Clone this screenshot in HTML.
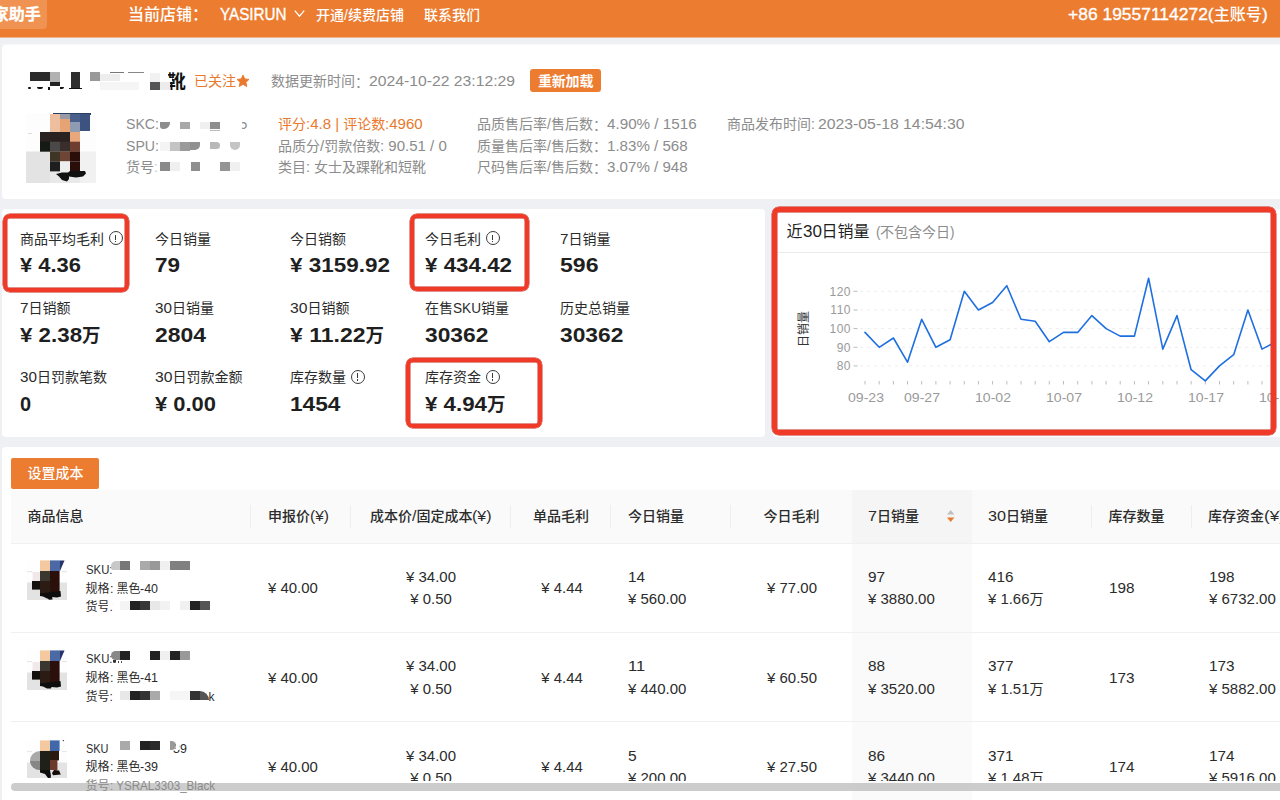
<!DOCTYPE html>
<html lang="zh-CN">
<head>
<meta charset="utf-8">
<title>卖家助手 - 商品详情</title>
<style>
*{box-sizing:border-box;margin:0;padding:0}
html,body{width:1280px;height:800px;overflow:hidden}
body{background:#eef0f4;font-family:"Liberation Sans","Noto Sans CJK SC",sans-serif;font-size:14px;color:#333;position:relative}
.abs{position:absolute;white-space:nowrap}
.lo{display:inline-block;vertical-align:baseline}
.li{display:inline-block;transform-origin:0 50%;white-space:pre}
.box{position:absolute}
#top{position:absolute;left:0;top:0;width:1280px;height:38px;background:linear-gradient(to bottom,#ec7c30 37px,#f0b48c 37px)}
#logo{position:absolute;left:-40px;top:0;width:87px;height:29px;background:rgba(255,255,255,.17);border-radius:0 0 4px 0}
.w{color:#fff}
.fc{position:relative;top:0.04em}
.sk .li{-webkit-text-stroke:.35px #fff}
.f16{font-size:16px}
.f12{font-size:12px}
.f20{font-size:20px;font-weight:bold;color:#1f1f1f}
.b{font-weight:bold}
.m{font-weight:500}
.card{position:absolute;background:#fff;border-radius:4px}
.g{color:#8c8c8c}
.o{color:#e8792d}
.d{color:#2b2b2b}
.ax{font-size:12px;color:#9a9a9a}
.btn{position:absolute;background:#ec7c30;border-radius:3px}
.info{position:absolute;width:14px;height:14px;border:1.1px solid #3a3a3a;border-radius:50%}
.info:before{content:"";position:absolute;left:5.3px;top:2.7px;width:1.2px;height:4.8px;background:#3a3a3a}
.info:after{content:"";position:absolute;left:5.3px;top:8.6px;width:1.2px;height:1.3px;background:#3a3a3a}
.red{position:absolute;border:4.6px solid #ee3a26;border-radius:7px;box-shadow:inset 0 0 0 .45px #c5221a,0 0 0 .45px #c5221a}
.sep{position:absolute;width:1px;height:23px;top:504.5px;background:#eeeeee}
.hl{position:absolute;height:1px;background:#f0f0f0}
</style>
</head>
<body>
<div id="top"><div id="logo"></div></div>
<svg class="box" style="left:293px;top:9px" width="14" height="10" viewBox="0 0 14 10"><path d="M1.8 1.6 L6.5 7.2 L11.2 1.6" fill="none" stroke="#fff" stroke-width="1.3"/></svg>
<div class="box" style="left:3px;top:44px;width:1280px;height:2px;background:#f7f8fa"></div>
<div class="card" style="left:2px;top:45px;width:1290px;height:154px"></div>
<svg class="box" style="left:236.4px;top:73.8px" width="14" height="14" viewBox="0 0 15 15"><path d="M7.5 1.2 L9.4 5.3 L13.9 5.8 L10.6 8.9 L11.5 13.4 L7.5 11.1 L3.5 13.4 L4.4 8.9 L1.1 5.8 L5.6 5.3 Z" fill="#e8792d" stroke="#e8792d" stroke-width="1" stroke-linejoin="round"/></svg>
<div class="btn" style="left:530px;top:69px;width:71px;height:23px"></div>
<div class="card" style="left:2px;top:209px;width:763px;height:228px"></div>
<div class="info" style="left:108.6px;top:231.2px"></div>
<div class="info" style="left:485.6px;top:231.2px"></div>
<div class="info" style="left:350.6px;top:369.7px"></div>
<div class="info" style="left:485.6px;top:369.7px"></div>
<div class="red" style="left:3.4px;top:213.7px;width:125.2px;height:78.4px"></div>
<div class="red" style="left:410px;top:214.3px;width:119.2px;height:76.5px"></div>
<div class="red" style="left:406.4px;top:357.6px;width:135.2px;height:70.3px"></div>
<div class="card" style="left:773px;top:209px;width:520px;height:228px"></div>
<div class="hl" style="left:777px;top:251.5px;width:495px;background:#ebebeb"></div>
<svg class="box" style="left:773px;top:208px" width="502" height="228" viewBox="773 208 502 228"><line x1="860" x2="1290" y1="291.3" y2="291.3" stroke="#eeeeee" stroke-width="1" stroke-dasharray="3 4"/><line x1="853.5" x2="857.5" y1="291.3" y2="291.3" stroke="#bbb" stroke-width="1"/><line x1="860" x2="1290" y1="310.0" y2="310.0" stroke="#eeeeee" stroke-width="1" stroke-dasharray="3 4"/><line x1="853.5" x2="857.5" y1="310.0" y2="310.0" stroke="#bbb" stroke-width="1"/><line x1="860" x2="1290" y1="328.6" y2="328.6" stroke="#eeeeee" stroke-width="1" stroke-dasharray="3 4"/><line x1="853.5" x2="857.5" y1="328.6" y2="328.6" stroke="#bbb" stroke-width="1"/><line x1="860" x2="1290" y1="347.3" y2="347.3" stroke="#eeeeee" stroke-width="1" stroke-dasharray="3 4"/><line x1="853.5" x2="857.5" y1="347.3" y2="347.3" stroke="#bbb" stroke-width="1"/><line x1="860" x2="1290" y1="365.9" y2="365.9" stroke="#eeeeee" stroke-width="1" stroke-dasharray="3 4"/><line x1="853.5" x2="857.5" y1="365.9" y2="365.9" stroke="#bbb" stroke-width="1"/><line x1="865.0" x2="865.0" y1="381" y2="384.5" stroke="#bdbdbd" stroke-width="1"/><line x1="879.2" x2="879.2" y1="381" y2="384.5" stroke="#bdbdbd" stroke-width="1"/><line x1="893.4" x2="893.4" y1="381" y2="384.5" stroke="#bdbdbd" stroke-width="1"/><line x1="907.5" x2="907.5" y1="381" y2="384.5" stroke="#bdbdbd" stroke-width="1"/><line x1="921.7" x2="921.7" y1="381" y2="384.5" stroke="#bdbdbd" stroke-width="1"/><line x1="935.9" x2="935.9" y1="381" y2="384.5" stroke="#bdbdbd" stroke-width="1"/><line x1="950.1" x2="950.1" y1="381" y2="384.5" stroke="#bdbdbd" stroke-width="1"/><line x1="964.3" x2="964.3" y1="381" y2="384.5" stroke="#bdbdbd" stroke-width="1"/><line x1="978.4" x2="978.4" y1="381" y2="384.5" stroke="#bdbdbd" stroke-width="1"/><line x1="992.6" x2="992.6" y1="381" y2="384.5" stroke="#bdbdbd" stroke-width="1"/><line x1="1006.8" x2="1006.8" y1="381" y2="384.5" stroke="#bdbdbd" stroke-width="1"/><line x1="1021.0" x2="1021.0" y1="381" y2="384.5" stroke="#bdbdbd" stroke-width="1"/><line x1="1035.2" x2="1035.2" y1="381" y2="384.5" stroke="#bdbdbd" stroke-width="1"/><line x1="1049.3" x2="1049.3" y1="381" y2="384.5" stroke="#bdbdbd" stroke-width="1"/><line x1="1063.5" x2="1063.5" y1="381" y2="384.5" stroke="#bdbdbd" stroke-width="1"/><line x1="1077.7" x2="1077.7" y1="381" y2="384.5" stroke="#bdbdbd" stroke-width="1"/><line x1="1091.9" x2="1091.9" y1="381" y2="384.5" stroke="#bdbdbd" stroke-width="1"/><line x1="1106.1" x2="1106.1" y1="381" y2="384.5" stroke="#bdbdbd" stroke-width="1"/><line x1="1120.2" x2="1120.2" y1="381" y2="384.5" stroke="#bdbdbd" stroke-width="1"/><line x1="1134.4" x2="1134.4" y1="381" y2="384.5" stroke="#bdbdbd" stroke-width="1"/><line x1="1148.6" x2="1148.6" y1="381" y2="384.5" stroke="#bdbdbd" stroke-width="1"/><line x1="1162.8" x2="1162.8" y1="381" y2="384.5" stroke="#bdbdbd" stroke-width="1"/><line x1="1177.0" x2="1177.0" y1="381" y2="384.5" stroke="#bdbdbd" stroke-width="1"/><line x1="1191.1" x2="1191.1" y1="381" y2="384.5" stroke="#bdbdbd" stroke-width="1"/><line x1="1205.3" x2="1205.3" y1="381" y2="384.5" stroke="#bdbdbd" stroke-width="1"/><line x1="1219.5" x2="1219.5" y1="381" y2="384.5" stroke="#bdbdbd" stroke-width="1"/><line x1="1233.7" x2="1233.7" y1="381" y2="384.5" stroke="#bdbdbd" stroke-width="1"/><line x1="1247.9" x2="1247.9" y1="381" y2="384.5" stroke="#bdbdbd" stroke-width="1"/><line x1="1262.0" x2="1262.0" y1="381" y2="384.5" stroke="#bdbdbd" stroke-width="1"/><line x1="1276.2" x2="1276.2" y1="381" y2="384.5" stroke="#bdbdbd" stroke-width="1"/><polyline points="865.0,332.4 879.2,347.3 893.4,338.0 907.5,362.2 921.7,319.3 935.9,347.3 950.1,339.8 964.3,291.3 978.4,310.0 992.6,302.5 1006.8,285.7 1021.0,319.3 1035.2,321.2 1049.3,341.7 1063.5,332.4 1077.7,332.4 1091.9,315.6 1106.1,328.6 1120.2,336.1 1134.4,336.1 1148.6,278.2 1162.8,349.1 1177.0,315.6 1191.1,369.7 1205.3,380.9 1219.5,365.9 1233.7,354.7 1247.9,310.0 1262.0,349.1 1276.2,341.7" fill="none" stroke="#1e6fe0" stroke-width="1.6" stroke-linejoin="round" stroke-linecap="round"/></svg>
<div class="card" style="left:2px;top:447px;width:1290px;height:360px"></div>
<div class="btn" style="left:11px;top:457.5px;width:88px;height:31.5px;border-radius:2px"></div>
<div class="box" style="left:11px;top:489.5px;width:1280px;height:54px;background:#fafafa"></div>
<div class="box" style="left:851.5px;top:489.5px;width:120px;height:54px;background:#f5f5f5"></div>
<div class="box" style="left:851.5px;top:543.5px;width:120px;height:260px;background:#fafafa"></div>
<div class="sep" style="left:250.0px"></div>
<div class="sep" style="left:350.0px"></div>
<div class="sep" style="left:510.0px"></div>
<div class="sep" style="left:610.0px"></div>
<div class="sep" style="left:730.0px"></div>
<div class="sep" style="left:1091.0px"></div>
<div class="sep" style="left:1191.0px"></div>
<div class="hl" style="left:11px;top:543px;width:1280px"></div>
<div class="hl" style="left:11px;top:632px;width:1280px"></div>
<div class="hl" style="left:11px;top:721px;width:1280px"></div>
<svg class="box" style="left:946px;top:509px" width="10" height="14" viewBox="0 0 10 14"><path d="M1 5.4 L4.7 1 L8.4 5.4 Z" fill="#bfbfbf"/><path d="M1 8.6 L4.7 13 L8.4 8.6 Z" fill="#e8792d"/></svg>
<svg class="box" style="left:26px;top:112.5px" width="70" height="70" viewBox="0 0 70 70"><rect x="0.0" y="0.0" width="70.0" height="70.0" fill="#fdfdfd"/><rect x="0.0" y="38.5" width="24.0" height="31.5" fill="#e3e3e3"/><rect x="54.0" y="38.5" width="16.0" height="31.5" fill="#f1f1f1"/><rect x="24.0" y="58.0" width="30.0" height="12.0" fill="#e9e9e9"/><rect x="27.0" y="0.0" width="38.0" height="2.0" fill="#2c3e63"/><rect x="24.0" y="1.0" width="10.0" height="18.0" fill="#eebf9f"/><rect x="34.0" y="1.0" width="10.0" height="18.0" fill="#e6a374"/><rect x="34.0" y="1.0" width="10.0" height="5.0" fill="#9a9aa6"/><rect x="44.0" y="1.0" width="10.0" height="8.0" fill="#4a5f8a"/><rect x="44.0" y="9.0" width="10.0" height="10.0" fill="#8f9bb3"/><rect x="54.0" y="1.0" width="10.0" height="17.0" fill="#3c527f"/><rect x="14.0" y="19.0" width="30.0" height="10.0" fill="#2a2220"/><rect x="44.0" y="19.0" width="10.0" height="10.0" fill="#e9a77c"/><rect x="14.0" y="28.7" width="10.0" height="10.0" fill="#161a14"/><rect x="24.0" y="28.7" width="10.0" height="10.0" fill="#4a4848"/><rect x="34.0" y="28.7" width="10.0" height="10.0" fill="#3a2e2c"/><rect x="44.0" y="28.7" width="10.0" height="10.0" fill="#6e3f30"/><rect x="24.0" y="38.5" width="10.0" height="10.0" fill="#3e3524"/><rect x="34.0" y="38.5" width="10.0" height="10.0" fill="#6e4434"/><rect x="44.0" y="38.5" width="10.0" height="10.0" fill="#2a0e0a"/><rect x="24.0" y="48.4" width="10.0" height="10.0" fill="#1e1e1e"/><rect x="34.0" y="48.4" width="10.0" height="10.0" fill="#eeeeee"/><rect x="44.0" y="48.4" width="10.0" height="10.0" fill="#2a0e0a"/><path d="M30 61 L36 59.5 L42 59.5 L44 58 L59 58 L60 60.5 L57 63.5 L50 64.5 L43 63.5 L43 66 L41 68.5 L36 67 L33 63.5 Z" fill="#111"/><rect x="2" y="20" width="4" height="1" fill="#ddd"/></svg>
<svg class="box" style="left:27.0px;top:559.8px" width="40" height="40" viewBox="0 0 40 40"><rect x="0.0" y="0.0" width="40.0" height="40.0" fill="#fefefe"/><rect x="0.0" y="22.5" width="40.0" height="17.5" fill="#e3e3e3"/><rect x="0.0" y="11.3" width="5.0" height="0.8" fill="#ddd"/><rect x="35.0" y="11.3" width="5.0" height="0.8" fill="#ddd"/><rect x="13.0" y="0.4" width="10.0" height="10.6" fill="#f4c9a0"/><rect x="23.0" y="0.4" width="10.0" height="10.6" fill="#4b69a4"/><rect x="5.6" y="12.0" width="7.4" height="9.0" fill="#f1e8ea"/><rect x="13.0" y="11.0" width="10.0" height="10.0" fill="#3a3630"/><rect x="23.0" y="11.0" width="9.6" height="24.0" fill="#2a0f0a"/><rect x="13.0" y="21.0" width="10.0" height="14.0" fill="#2a1c12"/><rect x="5.0" y="21.0" width="8.0" height="8.6" fill="#15110f"/><path d="M33 0.4 L37.5 0.4 L33 11 Z" fill="#26346a"/><path d="M32.6 11 L34 11 L31.5 22 L33.5 30 L33.8 36 L32.6 36 Z" fill="#fff" opacity=".0"/><path d="M13 33.5 L33.5 31 L34 36.5 L30 37.5 L24.5 37 L24 38.5 L20 38.6 L16 36.5 L13 36 Z" fill="#0d0d0d"/><path d="M21 36 L25 36 L25.5 39.6 L22 39.8 L20 37.5 Z" fill="#0d0d0d"/></svg>
<svg class="box" style="left:27.0px;top:649.6px" width="40" height="40" viewBox="0 0 40 40"><rect x="0.0" y="0.0" width="40.0" height="40.0" fill="#fefefe"/><rect x="0.0" y="22.5" width="40.0" height="17.5" fill="#e3e3e3"/><rect x="0.0" y="11.3" width="5.0" height="0.8" fill="#ddd"/><rect x="35.0" y="11.3" width="5.0" height="0.8" fill="#ddd"/><rect x="13.0" y="0.4" width="10.0" height="10.6" fill="#f4c9a0"/><rect x="23.0" y="0.4" width="10.0" height="10.6" fill="#4b69a4"/><rect x="5.6" y="12.0" width="7.4" height="9.0" fill="#f1e8ea"/><rect x="13.0" y="11.0" width="10.0" height="10.0" fill="#3a3630"/><rect x="23.0" y="11.0" width="9.6" height="24.0" fill="#2a0f0a"/><rect x="13.0" y="21.0" width="10.0" height="14.0" fill="#2a1c12"/><rect x="5.0" y="21.0" width="8.0" height="8.6" fill="#15110f"/><path d="M33 0.4 L37.5 0.4 L33 11 Z" fill="#26346a"/><path d="M32.6 11 L34 11 L31.5 22 L33.5 30 L33.8 36 L32.6 36 Z" fill="#fff" opacity=".0"/><path d="M13 33.5 L33.5 31 L34 36.5 L30 37.5 L24.5 37 L24 38.5 L20 38.6 L16 36.5 L13 36 Z" fill="#0d0d0d"/></svg>
<svg class="box" style="left:27.0px;top:739.6px" width="40" height="38.4" viewBox="0 0 40 38.4"><rect x="0.0" y="0.0" width="40.0" height="40.0" fill="#fefefe"/><rect x="0.0" y="22.5" width="40.0" height="17.5" fill="#e3e3e3"/><rect x="0.0" y="11.3" width="5.0" height="0.8" fill="#ddd"/><rect x="35.0" y="11.3" width="5.0" height="0.8" fill="#ddd"/><rect x="13.0" y="0.4" width="10.0" height="10.6" fill="#f4c9a0"/><rect x="23.0" y="0.4" width="9.6" height="10.6" fill="#4168a8"/><rect x="13.0" y="11.0" width="10.0" height="21.0" fill="#1f2118"/><rect x="23.0" y="11.0" width="9.0" height="9.4" fill="#2a1a10"/><rect x="23.0" y="20.0" width="7.4" height="10.0" fill="#6b3a2c"/><path d="M13 11 L13 30 A10 9.8 0 0 1 3 20.5 A10 9.6 0 0 1 13 11 Z" fill="#a9a9a9"/><path d="M13 21 L13 30 A10 9.8 0 0 1 3 21 Z" fill="#868686"/><path d="M35 -1 L37.6 -1 L36.4 1.6 Z" fill="#1c2340"/><path d="M13 30 L23 30 L24 36 L23.5 38.2 L21 38 L18 34 L13 32.5 Z" fill="#0d0d0d"/><path d="M25 33 L27 30 L32 30.5 L33.8 34.5 L26 35.2 Z" fill="#140a08"/></svg>
<div id="t1" class="abs w f16 b" style="top:5.0px;line-height:20px;left:-23.2px;-webkit-text-stroke:.3px #fff;">卖家助手</div>
<div id="t2" class="abs w f16 m" style="top:4.5px;line-height:20px;left:128.0px;">当前店铺<span class="fc">：</span></div>
<div id="t3" class="abs w f16 sk" style="top:5.0px;line-height:20px;left:219.5px;"><span class="lo" style="width:66.50px"><span class="li" style="transform:scaleX(0.9508)">YASIRUN</span></span></div>
<div id="t4" class="abs w m" style="top:4.5px;line-height:20px;left:316.0px;">开通/续费店铺</div>
<div id="t5" class="abs w m" style="top:4.5px;line-height:20px;left:424.0px;">联系我们</div>
<div id="t6" class="abs w f16 sk m" style="top:4.5px;line-height:20px;left:1068.0px;"><span class="lo" style="width:145.67px"><span class="li" style="transform:scaleX(1.0903)">+86 19557114272(</span></span>主账号<span class="lo" style="width:5.81px"><span class="li" style="transform:scaleX(1.0903)">)</span></span></div>
<div id="t7" class="abs b" style="top:69.0px;line-height:26px;left:167.2px;font-size:18.5px;color:#111;">靴</div>
<div id="t8" class="abs o" style="top:71.0px;line-height:20px;left:194.0px;">已关注</div>
<div id="t9" class="abs g" style="top:71.0px;line-height:20px;left:271.0px;">数据更新时间<span class="fc">：</span></div>
<div id="t10" class="abs g" style="top:71.0px;line-height:20px;left:369.0px;"><span class="lo" style="width:146.00px"><span class="li" style="transform:scaleX(1.1231)">2024-10-22 23:12:29</span></span></div>
<div id="t11" class="abs w b" style="top:70.5px;line-height:20px;left:538.0px;letter-spacing:-0.2px;">重新加载</div>
<div id="t12" class="abs g" style="top:114.0px;line-height:20px;left:126.0px;"><span class="lo" style="width:33.00px"><span class="li" style="transform:scaleX(1.0096)">SKC:</span></span></div>
<div id="t13" class="abs g" style="top:114.0px;line-height:20px;left:239.6px;">5</div>
<div id="t14" class="abs g" style="top:135.6px;line-height:20px;left:126.0px;"><span class="lo" style="width:33.00px"><span class="li" style="transform:scaleX(1.0096)">SPU:</span></span></div>
<div id="t15" class="abs g" style="top:157.2px;line-height:20px;left:126.0px;">货号:</div>
<div id="t16" class="abs o" style="top:114.0px;line-height:20px;left:278.0px;">评分<span class="lo" style="width:37.36px"><span class="li" style="transform:scaleX(1.0741)">:4.8 | </span></span>评论数<span class="lo" style="width:37.65px"><span class="li" style="transform:scaleX(1.0741)">:4960</span></span></div>
<div id="t17" class="abs g" style="top:135.6px;line-height:20px;left:278.0px;">品质分<span class="lo" style="width:4.17px"><span class="li" style="transform:scaleX(1.0730)">/</span></span>罚款倍数<span class="lo" style="width:66.83px"><span class="li" style="transform:scaleX(1.0730)">: 90.51 / 0</span></span></div>
<div id="t18" class="abs g" style="top:157.2px;line-height:20px;left:278.0px;">类目<span class="lo" style="width:8.00px"><span class="li" style="transform:scaleX(1.0281)">: </span></span>女士及踝靴和短靴</div>
<div id="t19" class="abs g" style="top:114.0px;line-height:20px;left:477.0px;">品质售后率/售后数<span class="fc">：</span></div>
<div id="t20" class="abs g" style="top:114.0px;line-height:20px;left:607.0px;"><span class="lo" style="width:89.61px"><span class="li" style="transform:scaleX(1.0859)">4.90% / 1516</span></span></div>
<div id="t21" class="abs g" style="top:135.6px;line-height:20px;left:477.0px;">质量售后率/售后数<span class="fc">：</span></div>
<div id="t22" class="abs g" style="top:135.6px;line-height:20px;left:607.0px;"><span class="lo" style="width:80.69px"><span class="li" style="transform:scaleX(1.0798)">1.83% / 568</span></span></div>
<div id="t23" class="abs g" style="top:157.2px;line-height:20px;left:477.0px;">尺码售后率/售后数<span class="fc">：</span></div>
<div id="t24" class="abs g" style="top:157.2px;line-height:20px;left:607.0px;"><span class="lo" style="width:80.69px"><span class="li" style="transform:scaleX(1.0798)">3.07% / 948</span></span></div>
<div id="t25" class="abs g" style="top:114.0px;line-height:20px;left:727.0px;">商品发布时间:</div>
<div id="t26" class="abs g" style="top:114.0px;line-height:20px;left:818.0px;"><span class="lo" style="width:146.50px"><span class="li" style="transform:scaleX(1.1269)">2023-05-18 14:54:30</span></span></div>
<div id="t27" class="abs d" style="top:228.5px;line-height:20px;left:20.0px;">商品平均毛利</div>
<div id="t28" class="abs f20" style="top:252.0px;line-height:26px;left:20.0px;"><span class="lo" style="width:61.00px"><span class="li" style="transform:scaleX(1.0969)">¥ 4.36</span></span></div>
<div id="t29" class="abs d" style="top:228.5px;line-height:20px;left:155.0px;">今日销量</div>
<div id="t30" class="abs f20" style="top:252.0px;line-height:26px;left:155.0px;"><span class="lo" style="width:25.00px"><span class="li" style="transform:scaleX(1.1236)">79</span></span></div>
<div id="t31" class="abs d" style="top:228.5px;line-height:20px;left:290.0px;">今日销额</div>
<div id="t32" class="abs f20" style="top:252.0px;line-height:26px;left:290.0px;"><span class="lo" style="width:100.00px"><span class="li" style="transform:scaleX(1.1238)">¥ 3159.92</span></span></div>
<div id="t33" class="abs d" style="top:228.5px;line-height:20px;left:425.0px;">今日毛利</div>
<div id="t34" class="abs f20" style="top:252.0px;line-height:26px;left:425.0px;"><span class="lo" style="width:87.00px"><span class="li" style="transform:scaleX(1.1174)">¥ 434.42</span></span></div>
<div id="t35" class="abs d" style="top:228.5px;line-height:20px;left:560.0px;"><span class="lo" style="width:8.50px"><span class="li" style="transform:scaleX(1.0902)">7</span></span>日销量</div>
<div id="t36" class="abs f20" style="top:252.0px;line-height:26px;left:560.0px;"><span class="lo" style="width:38.51px"><span class="li" style="transform:scaleX(1.1536)">596</span></span></div>
<div id="t37" class="abs d" style="top:297.5px;line-height:20px;left:20.0px;"><span class="lo" style="width:8.60px"><span class="li" style="transform:scaleX(1.1030)">7</span></span>日销额</div>
<div id="t38" class="abs f20" style="top:321.5px;line-height:26px;left:20.0px;"><span class="lo" style="width:62.08px"><span class="li" style="transform:scaleX(1.1164)">¥ 2.38</span></span><span style="font-size:18.5px">万</span></div>
<div id="t39" class="abs d" style="top:297.5px;line-height:20px;left:155.0px;"><span class="lo" style="width:17.00px"><span class="li" style="transform:scaleX(1.0913)">30</span></span>日销量</div>
<div id="t40" class="abs f20" style="top:321.5px;line-height:26px;left:155.0px;"><span class="lo" style="width:51.00px"><span class="li" style="transform:scaleX(1.1461)">2804</span></span></div>
<div id="t41" class="abs d" style="top:297.5px;line-height:20px;left:290.0px;"><span class="lo" style="width:17.50px"><span class="li" style="transform:scaleX(1.1234)">30</span></span>日销额</div>
<div id="t42" class="abs f20" style="top:321.5px;line-height:26px;left:290.0px;"><span class="lo" style="width:75.48px"><span class="li" style="transform:scaleX(1.1502)">¥ 11.22</span></span><span style="font-size:18.5px">万</span></div>
<div id="t43" class="abs d" style="top:297.5px;line-height:20px;left:425.0px;">在售<span class="lo" style="width:28.00px"><span class="li" style="transform:scaleX(0.9723)">SKU</span></span>销量</div>
<div id="t44" class="abs f20" style="top:321.5px;line-height:26px;left:425.0px;"><span class="lo" style="width:63.40px"><span class="li" style="transform:scaleX(1.1398)">30362</span></span></div>
<div id="t45" class="abs d" style="top:297.5px;line-height:20px;left:560.0px;">历史总销量</div>
<div id="t46" class="abs f20" style="top:321.5px;line-height:26px;left:560.0px;"><span class="lo" style="width:63.40px"><span class="li" style="transform:scaleX(1.1398)">30362</span></span></div>
<div id="t47" class="abs d" style="top:367.0px;line-height:20px;left:20.0px;"><span class="lo" style="width:17.00px"><span class="li" style="transform:scaleX(1.0913)">30</span></span>日罚款笔数</div>
<div id="t48" class="abs f20" style="top:391.0px;line-height:26px;left:20.0px;">0</div>
<div id="t49" class="abs d" style="top:367.0px;line-height:20px;left:155.0px;"><span class="lo" style="width:17.50px"><span class="li" style="transform:scaleX(1.1234)">30</span></span>日罚款金额</div>
<div id="t50" class="abs f20" style="top:391.0px;line-height:26px;left:155.0px;"><span class="lo" style="width:61.00px"><span class="li" style="transform:scaleX(1.0969)">¥ 0.00</span></span></div>
<div id="t51" class="abs d" style="top:367.0px;line-height:20px;left:290.0px;">库存数量</div>
<div id="t52" class="abs f20" style="top:391.0px;line-height:26px;left:290.0px;"><span class="lo" style="width:50.50px"><span class="li" style="transform:scaleX(1.1348)">1454</span></span></div>
<div id="t53" class="abs d" style="top:367.0px;line-height:20px;left:425.0px;">库存资金</div>
<div id="t54" class="abs f20" style="top:391.0px;line-height:26px;left:425.0px;"><span class="lo" style="width:61.98px"><span class="li" style="transform:scaleX(1.1146)">¥ 4.94</span></span><span style="font-size:18.5px">万</span></div>
<div id="t55" class="abs f16" style="top:220.5px;line-height:22px;left:786.5px;color:#1f1f1f;">近<span class="lo" style="width:18.97px"><span class="li" style="transform:scaleX(1.0658)">30</span></span>日销量</div>
<div id="t56" class="abs g" style="top:222.0px;line-height:20px;left:875.5px;"><span class="lo" style="width:4.50px"><span class="li" style="transform:scaleX(0.9632)">(</span></span>不包含今日<span class="lo" style="width:4.50px"><span class="li" style="transform:scaleX(0.9632)">)</span></span></div>
<div id="t57" class="abs ax" style="top:284.6px;line-height:14px;right:429.5px;letter-spacing:0.5px;margin-right:-0.5px;">120</div>
<div id="t58" class="abs ax" style="top:303.3px;line-height:14px;right:429.5px;letter-spacing:0.5px;margin-right:-0.5px;">110</div>
<div id="t59" class="abs ax" style="top:321.9px;line-height:14px;right:429.5px;letter-spacing:0.5px;margin-right:-0.5px;">100</div>
<div id="t60" class="abs ax" style="top:340.6px;line-height:14px;right:429.5px;letter-spacing:0.5px;margin-right:-0.5px;">90</div>
<div id="t61" class="abs ax" style="top:359.2px;line-height:14px;right:429.5px;letter-spacing:0.5px;margin-right:-0.5px;">80</div>
<div id="t62" class="abs ax" style="top:390.5px;line-height:14px;left:865.5px;transform:translateX(-50%);"><span class="lo" style="width:36.00px"><span class="li" style="transform:scaleX(1.1725)">09-23</span></span></div>
<div id="t63" class="abs ax" style="top:390.5px;line-height:14px;left:922.2px;transform:translateX(-50%);"><span class="lo" style="width:36.00px"><span class="li" style="transform:scaleX(1.1725)">09-27</span></span></div>
<div id="t64" class="abs ax" style="top:390.5px;line-height:14px;left:993.1px;transform:translateX(-50%);"><span class="lo" style="width:36.00px"><span class="li" style="transform:scaleX(1.1725)">10-02</span></span></div>
<div id="t65" class="abs ax" style="top:390.5px;line-height:14px;left:1064.0px;transform:translateX(-50%);"><span class="lo" style="width:36.00px"><span class="li" style="transform:scaleX(1.1725)">10-07</span></span></div>
<div id="t66" class="abs ax" style="top:390.5px;line-height:14px;left:1134.9px;transform:translateX(-50%);"><span class="lo" style="width:36.00px"><span class="li" style="transform:scaleX(1.1725)">10-12</span></span></div>
<div id="t67" class="abs ax" style="top:390.5px;line-height:14px;left:1205.8px;transform:translateX(-50%);"><span class="lo" style="width:36.00px"><span class="li" style="transform:scaleX(1.1725)">10-17</span></span></div>
<div id="t68" class="abs ax" style="top:390.5px;line-height:14px;left:1276.7px;transform:translateX(-50%);"><span class="lo" style="width:36.00px"><span class="li" style="transform:scaleX(1.1725)">10-22</span></span></div>
<div id="t69" class="abs f12" style="top:322.0px;line-height:14px;left:803.5px;transform:translateX(-50%);color:#333;transform:translateX(-50%) rotate(-90deg);">日销量</div>
<div id="t70" class="abs w m" style="top:463.0px;line-height:20px;left:27.5px;">设置成本</div>
<div id="t71" class="abs m d" style="top:506.2px;line-height:20px;left:27.5px;">商品信息</div>
<div id="t72" class="abs m d" style="top:506.2px;line-height:20px;left:268.0px;">申报价<span class="lo" style="width:18.99px"><span class="li" style="transform:scaleX(1.1095)">(¥)</span></span></div>
<div id="t73" class="abs m d" style="top:506.2px;line-height:20px;left:431.0px;transform:translateX(-50%);">成本价<span class="lo" style="width:4.44px"><span class="li" style="transform:scaleX(1.1420)">/</span></span>固定成本<span class="lo" style="width:19.55px"><span class="li" style="transform:scaleX(1.1420)">(¥)</span></span></div>
<div id="t74" class="abs m d" style="top:506.2px;line-height:20px;left:561.0px;transform:translateX(-50%);">单品毛利</div>
<div id="t75" class="abs m d" style="top:506.2px;line-height:20px;left:628.0px;">今日销量</div>
<div id="t76" class="abs m d" style="top:506.2px;line-height:20px;left:791.5px;transform:translateX(-50%);">今日毛利</div>
<div id="t77" class="abs m d" style="top:506.2px;line-height:20px;left:868.0px;"><span class="lo" style="width:9.00px"><span class="li" style="transform:scaleX(1.1543)">7</span></span>日销量</div>
<div id="t78" class="abs m d" style="top:506.2px;line-height:20px;left:988.0px;"><span class="lo" style="width:18.00px"><span class="li" style="transform:scaleX(1.1555)">30</span></span>日销量</div>
<div id="t79" class="abs m d" style="top:506.2px;line-height:20px;left:1108.5px;">库存数量</div>
<div id="t80" class="abs m d" style="top:506.2px;line-height:20px;left:1208.0px;">库存资金<span class="lo" style="width:20.99px"><span class="li" style="transform:scaleX(1.2263)">(¥)</span></span></div>
<div id="t81" class="abs f12 d" style="top:561.8px;line-height:16px;left:85.5px;"><span class="lo" style="width:26.50px"><span class="li" style="transform:scaleX(0.9459)">SKU:</span></span></div>
<div id="t82" class="abs f12 d" style="top:580.7px;line-height:16px;left:85.5px;">规格<span class="lo" style="width:6.93px"><span class="li" style="transform:scaleX(1.0397)">: </span></span>黑色<span class="lo" style="width:18.03px"><span class="li" style="transform:scaleX(1.0397)">-40</span></span></div>
<div id="t83" class="abs f12 d" style="top:599.3px;line-height:16px;left:85.5px;">货号:</div>
<div id="t84" class="abs d tb" style="top:578.4px;line-height:20px;left:267.5px;"><span class="lo" style="width:49.90px"><span class="li" style="transform:scaleX(1.0681)">¥ 40.00</span></span></div>
<div id="t85" class="abs d tb" style="top:567.0px;line-height:20px;left:431.0px;transform:translateX(-50%);"><span class="lo" style="width:49.90px"><span class="li" style="transform:scaleX(1.0681)">¥ 34.00</span></span></div>
<div id="t86" class="abs d tb" style="top:589.2px;line-height:20px;left:431.0px;transform:translateX(-50%);"><span class="lo" style="width:41.45px"><span class="li" style="transform:scaleX(1.0645)">¥ 0.50</span></span></div>
<div id="t87" class="abs d tb" style="top:578.4px;line-height:20px;left:561.5px;transform:translateX(-50%);"><span class="lo" style="width:41.45px"><span class="li" style="transform:scaleX(1.0645)">¥ 4.44</span></span></div>
<div id="t88" class="abs d tb" style="top:567.0px;line-height:20px;left:628.0px;"><span class="lo" style="width:17.10px"><span class="li" style="transform:scaleX(1.0977)">14</span></span></div>
<div id="t89" class="abs d tb" style="top:589.2px;line-height:20px;left:628.0px;"><span class="lo" style="width:58.35px"><span class="li" style="transform:scaleX(1.0706)">¥ 560.00</span></span></div>
<div id="t90" class="abs d tb" style="top:578.4px;line-height:20px;left:791.5px;transform:translateX(-50%);"><span class="lo" style="width:49.90px"><span class="li" style="transform:scaleX(1.0681)">¥ 77.00</span></span></div>
<div id="t91" class="abs d tb" style="top:567.0px;line-height:20px;left:868.0px;"><span class="lo" style="width:17.10px"><span class="li" style="transform:scaleX(1.0977)">97</span></span></div>
<div id="t92" class="abs d tb" style="top:589.2px;line-height:20px;left:868.0px;"><span class="lo" style="width:66.80px"><span class="li" style="transform:scaleX(1.0723)">¥ 3880.00</span></span></div>
<div id="t93" class="abs d tb" style="top:567.0px;line-height:20px;left:988.0px;"><span class="lo" style="width:25.55px"><span class="li" style="transform:scaleX(1.0938)">416</span></span></div>
<div id="t94" class="abs d tb" style="top:589.2px;line-height:20px;left:988.0px;"><span class="lo" style="width:41.45px"><span class="li" style="transform:scaleX(1.0645)">¥ 1.66</span></span>万</div>
<div id="t95" class="abs d tb" style="top:578.4px;line-height:20px;left:1109.0px;"><span class="lo" style="width:25.55px"><span class="li" style="transform:scaleX(1.0938)">198</span></span></div>
<div id="t96" class="abs d tb" style="top:567.0px;line-height:20px;left:1209.0px;"><span class="lo" style="width:25.55px"><span class="li" style="transform:scaleX(1.0938)">198</span></span></div>
<div id="t97" class="abs d tb" style="top:589.2px;line-height:20px;left:1209.0px;"><span class="lo" style="width:66.80px"><span class="li" style="transform:scaleX(1.0723)">¥ 6732.00</span></span></div>
<div id="t98" class="abs f12 d" style="top:651.2px;line-height:16px;left:85.5px;"><span class="lo" style="width:26.50px"><span class="li" style="transform:scaleX(0.9459)">SKU:</span></span></div>
<div id="t99" class="abs f12 d" style="top:670.1px;line-height:16px;left:85.5px;">规格<span class="lo" style="width:6.93px"><span class="li" style="transform:scaleX(1.0397)">: </span></span>黑色<span class="lo" style="width:18.03px"><span class="li" style="transform:scaleX(1.0397)">-41</span></span></div>
<div id="t100" class="abs f12 d" style="top:688.7px;line-height:16px;left:85.5px;">货号:</div>
<div id="t101" class="abs f12 d" style="top:688.7px;line-height:16px;left:208.6px;">k</div>
<div id="t102" class="abs d tb" style="top:667.8px;line-height:20px;left:267.5px;"><span class="lo" style="width:49.90px"><span class="li" style="transform:scaleX(1.0681)">¥ 40.00</span></span></div>
<div id="t103" class="abs d tb" style="top:656.4px;line-height:20px;left:431.0px;transform:translateX(-50%);"><span class="lo" style="width:49.90px"><span class="li" style="transform:scaleX(1.0681)">¥ 34.00</span></span></div>
<div id="t104" class="abs d tb" style="top:678.6px;line-height:20px;left:431.0px;transform:translateX(-50%);"><span class="lo" style="width:41.45px"><span class="li" style="transform:scaleX(1.0645)">¥ 0.50</span></span></div>
<div id="t105" class="abs d tb" style="top:667.8px;line-height:20px;left:561.5px;transform:translateX(-50%);"><span class="lo" style="width:41.45px"><span class="li" style="transform:scaleX(1.0645)">¥ 4.44</span></span></div>
<div id="t106" class="abs d tb" style="top:656.4px;line-height:20px;left:628.0px;"><span class="lo" style="width:17.10px"><span class="li" style="transform:scaleX(1.1755)">11</span></span></div>
<div id="t107" class="abs d tb" style="top:678.6px;line-height:20px;left:628.0px;"><span class="lo" style="width:58.35px"><span class="li" style="transform:scaleX(1.0706)">¥ 440.00</span></span></div>
<div id="t108" class="abs d tb" style="top:667.8px;line-height:20px;left:791.5px;transform:translateX(-50%);"><span class="lo" style="width:49.90px"><span class="li" style="transform:scaleX(1.0681)">¥ 60.50</span></span></div>
<div id="t109" class="abs d tb" style="top:656.4px;line-height:20px;left:868.0px;"><span class="lo" style="width:17.10px"><span class="li" style="transform:scaleX(1.0977)">88</span></span></div>
<div id="t110" class="abs d tb" style="top:678.6px;line-height:20px;left:868.0px;"><span class="lo" style="width:66.80px"><span class="li" style="transform:scaleX(1.0723)">¥ 3520.00</span></span></div>
<div id="t111" class="abs d tb" style="top:656.4px;line-height:20px;left:988.0px;"><span class="lo" style="width:25.55px"><span class="li" style="transform:scaleX(1.0938)">377</span></span></div>
<div id="t112" class="abs d tb" style="top:678.6px;line-height:20px;left:988.0px;"><span class="lo" style="width:41.45px"><span class="li" style="transform:scaleX(1.0645)">¥ 1.51</span></span>万</div>
<div id="t113" class="abs d tb" style="top:667.8px;line-height:20px;left:1109.0px;"><span class="lo" style="width:25.55px"><span class="li" style="transform:scaleX(1.0938)">173</span></span></div>
<div id="t114" class="abs d tb" style="top:656.4px;line-height:20px;left:1209.0px;"><span class="lo" style="width:25.55px"><span class="li" style="transform:scaleX(1.0938)">173</span></span></div>
<div id="t115" class="abs d tb" style="top:678.6px;line-height:20px;left:1209.0px;"><span class="lo" style="width:66.80px"><span class="li" style="transform:scaleX(1.0723)">¥ 5882.00</span></span></div>
<div id="t116" class="abs f12 d" style="top:740.5px;line-height:16px;left:85.5px;"><span class="lo" style="width:22.50px"><span class="li" style="transform:scaleX(0.9114)">SKU</span></span></div>
<div id="t117" class="abs f12 d" style="top:740.5px;line-height:16px;left:173.3px;"><span class="lo" style="width:13.80px"><span class="li" style="transform:scaleX(1.0330)">39</span></span></div>
<div id="t118" class="abs f12 d" style="top:759.4px;line-height:16px;left:85.5px;">规格<span class="lo" style="width:6.93px"><span class="li" style="transform:scaleX(1.0397)">: </span></span>黑色<span class="lo" style="width:18.03px"><span class="li" style="transform:scaleX(1.0397)">-39</span></span></div>
<div id="t119" class="abs f12" style="top:778.3px;line-height:16px;left:85.5px;color:#8a8a8a;z-index:5;">货号<span class="lo" style="width:104.99px"><span class="li" style="transform:scaleX(0.9675)">: YSRAL3303_Black</span></span></div>
<div id="t120" class="abs d tb" style="top:757.1px;line-height:20px;left:267.5px;"><span class="lo" style="width:49.90px"><span class="li" style="transform:scaleX(1.0681)">¥ 40.00</span></span></div>
<div id="t121" class="abs d tb" style="top:745.7px;line-height:20px;left:431.0px;transform:translateX(-50%);"><span class="lo" style="width:49.90px"><span class="li" style="transform:scaleX(1.0681)">¥ 34.00</span></span></div>
<div id="t122" class="abs d tb" style="top:767.9px;line-height:20px;left:431.0px;transform:translateX(-50%);"><span class="lo" style="width:41.45px"><span class="li" style="transform:scaleX(1.0645)">¥ 0.50</span></span></div>
<div id="t123" class="abs d tb" style="top:757.1px;line-height:20px;left:561.5px;transform:translateX(-50%);"><span class="lo" style="width:41.45px"><span class="li" style="transform:scaleX(1.0645)">¥ 4.44</span></span></div>
<div id="t124" class="abs d tb" style="top:745.7px;line-height:20px;left:628.0px;"><span class="lo" style="width:8.65px"><span class="li" style="transform:scaleX(1.1094)">5</span></span></div>
<div id="t125" class="abs d tb" style="top:767.9px;line-height:20px;left:628.0px;"><span class="lo" style="width:58.35px"><span class="li" style="transform:scaleX(1.0706)">¥ 200.00</span></span></div>
<div id="t126" class="abs d tb" style="top:757.1px;line-height:20px;left:791.5px;transform:translateX(-50%);"><span class="lo" style="width:49.90px"><span class="li" style="transform:scaleX(1.0681)">¥ 27.50</span></span></div>
<div id="t127" class="abs d tb" style="top:745.7px;line-height:20px;left:868.0px;"><span class="lo" style="width:17.10px"><span class="li" style="transform:scaleX(1.0977)">86</span></span></div>
<div id="t128" class="abs d tb" style="top:767.9px;line-height:20px;left:868.0px;"><span class="lo" style="width:66.80px"><span class="li" style="transform:scaleX(1.0723)">¥ 3440.00</span></span></div>
<div id="t129" class="abs d tb" style="top:745.7px;line-height:20px;left:988.0px;"><span class="lo" style="width:25.55px"><span class="li" style="transform:scaleX(1.0938)">371</span></span></div>
<div id="t130" class="abs d tb" style="top:767.9px;line-height:20px;left:988.0px;"><span class="lo" style="width:41.45px"><span class="li" style="transform:scaleX(1.0645)">¥ 1.48</span></span>万</div>
<div id="t131" class="abs d tb" style="top:757.1px;line-height:20px;left:1109.0px;"><span class="lo" style="width:25.55px"><span class="li" style="transform:scaleX(1.0938)">174</span></span></div>
<div id="t132" class="abs d tb" style="top:745.7px;line-height:20px;left:1209.0px;"><span class="lo" style="width:25.55px"><span class="li" style="transform:scaleX(1.0938)">174</span></span></div>
<div id="t133" class="abs d tb" style="top:767.9px;line-height:20px;left:1209.0px;"><span class="lo" style="width:66.80px"><span class="li" style="transform:scaleX(1.0723)">¥ 5916.00</span></span></div>
<div class="red" style="left:772.2px;top:207px;width:504px;height:228px;border-width:5px"></div>
<div class="box" style="left:30.0px;top:72.0px;width:20.2px;height:9.0px;background:#2b2b2b;"></div>
<div class="box" style="left:50.2px;top:72.0px;width:9.8px;height:9.8px;background:#b2b2b2;"></div>
<div class="box" style="left:50.2px;top:81.8px;width:9.8px;height:4.7px;background:#222;"></div>
<div class="box" style="left:70.6px;top:72.0px;width:9.6px;height:16.6px;background:#2e2e2e;"></div>
<div class="box" style="left:90.3px;top:72.4px;width:9.9px;height:8.6px;background:#999;"></div>
<div class="box" style="left:100.2px;top:73.5px;width:19.8px;height:7.5px;background:#ededed;"></div>
<div class="box" style="left:100.2px;top:81.8px;width:39.3px;height:8.2px;background:#f5f5f5;"></div>
<div class="box" style="left:110.0px;top:72.3px;width:14.0px;height:1.2px;background:#777;"></div>
<div class="box" style="left:127.5px;top:72.3px;width:16.5px;height:1.2px;background:#888;"></div>
<div class="box" style="left:160.0px;top:69.0px;width:8.2px;height:12.8px;background:#fff;"></div>
<div class="box" style="left:160.0px;top:69.0px;width:12.0px;height:2.8px;background:#fff;"></div>
<div class="box" style="left:150.0px;top:72.6px;width:10.0px;height:9.0px;background:#f1f1f1;"></div>
<div class="box" style="left:150.0px;top:81.8px;width:10.0px;height:8.4px;background:#555;"></div>
<div class="box" style="left:160.0px;top:81.8px;width:10.0px;height:8.4px;background:#ececec;"></div>
<div class="box" style="left:168.0px;top:77.5px;width:4.0px;height:4.3px;background:#fff;"></div>
<div class="box" style="left:27.5px;top:86.5px;width:3.5px;height:2.0px;background:#111;border-radius:1px;"></div>
<div class="box" style="left:37.0px;top:87.0px;width:6.0px;height:2.3px;background:#111;border-radius:0 0 2px 2px;"></div>
<div class="box" style="left:48.0px;top:87.0px;width:2.0px;height:2.5px;background:#111;"></div>
<div class="box" style="left:60.0px;top:87.0px;width:4.0px;height:2.3px;background:#111;border-radius:0 0 2px 0;"></div>
<div class="box" style="left:69.0px;top:88.0px;width:13.0px;height:1.4px;background:#111;"></div>
<div class="box" style="left:238.0px;top:117.0px;width:4.3px;height:15.0px;background:#fff;"></div>
<div class="box" style="left:238.0px;top:117.0px;width:10.0px;height:4.2px;background:#fff;"></div>
<div class="box" style="left:155.0px;top:162.0px;width:4.5px;height:10.0px;background:rgba(255,255,255,.55);"></div>
<div class="box" style="left:160.0px;top:121.7px;width:9.8px;height:7.1px;background:#8c8c8c;border-radius:0 0 6px 3px;"></div>
<div class="box" style="left:180.0px;top:121.7px;width:10.0px;height:7.1px;background:#a8a8a8;"></div>
<div class="box" style="left:200.4px;top:121.7px;width:9.3px;height:7.1px;background:#f0f0f0;"></div>
<div class="box" style="left:210.0px;top:121.7px;width:10.0px;height:7.8px;background:#8e8e8e;"></div>
<div class="box" style="left:210.0px;top:130.2px;width:10.0px;height:1.0px;background:#bbb;"></div>
<div class="box" style="left:160.0px;top:141.9px;width:10.0px;height:9.3px;background:#f4f4f4;"></div>
<div class="box" style="left:170.0px;top:141.9px;width:10.0px;height:9.3px;background:#c4c4c4;"></div>
<div class="box" style="left:180.0px;top:141.9px;width:10.0px;height:8.9px;background:#9a9a9a;"></div>
<div class="box" style="left:190.0px;top:141.9px;width:10.0px;height:8.1px;background:#909090;border-radius:0 0 5px 0;"></div>
<div class="box" style="left:210.0px;top:142.0px;width:10.0px;height:7.0px;background:#b8b8b8;border-radius:0 4px 4px 0;"></div>
<div class="box" style="left:230.0px;top:142.0px;width:10.0px;height:7.5px;background:#c4c4c4;border-radius:0 0 8px 8px;"></div>
<div class="box" style="left:160.0px;top:161.6px;width:10.0px;height:9.9px;background:#8a8a8a;"></div>
<div class="box" style="left:170.0px;top:161.6px;width:10.0px;height:9.9px;background:#efefef;"></div>
<div class="box" style="left:190.5px;top:161.6px;width:9.5px;height:9.9px;background:#8e8e8e;"></div>
<div class="box" style="left:220.0px;top:161.6px;width:10.0px;height:9.9px;background:#949494;"></div>
<div class="box" style="left:230.0px;top:161.6px;width:10.0px;height:9.9px;background:#f0f0f0;"></div>
<div class="box" style="left:108.0px;top:600.0px;width:4.0px;height:7.5px;background:#fff;"></div>
<div class="box" style="left:111.0px;top:560.8px;width:9.0px;height:9.7px;background:#c8c8c8;border-radius:5px 0 0 2px;"></div>
<div class="box" style="left:120.0px;top:560.8px;width:10.0px;height:9.7px;background:#777;"></div>
<div class="box" style="left:140.0px;top:560.8px;width:10.0px;height:9.7px;background:#aaa;"></div>
<div class="box" style="left:150.0px;top:560.8px;width:10.0px;height:9.7px;background:#999;"></div>
<div class="box" style="left:160.0px;top:560.8px;width:10.0px;height:9.7px;background:#f0f0f0;"></div>
<div class="box" style="left:170.0px;top:560.8px;width:20.0px;height:9.7px;background:#808080;"></div>
<div class="box" style="left:120.0px;top:601.0px;width:10.0px;height:9.0px;background:#f4f4f4;"></div>
<div class="box" style="left:130.0px;top:601.0px;width:10.0px;height:9.0px;background:#222;"></div>
<div class="box" style="left:140.0px;top:601.0px;width:10.0px;height:9.0px;background:#383838;"></div>
<div class="box" style="left:150.0px;top:601.0px;width:10.0px;height:9.0px;background:#e8e8e8;"></div>
<div class="box" style="left:160.0px;top:601.0px;width:10.0px;height:9.0px;background:#f2f2f2;"></div>
<div class="box" style="left:180.0px;top:601.0px;width:10.0px;height:9.0px;background:#f0f0f0;"></div>
<div class="box" style="left:190.0px;top:601.0px;width:10.0px;height:9.0px;background:#222;"></div>
<div class="box" style="left:200.0px;top:601.0px;width:10.0px;height:9.0px;background:#555;"></div>
<div class="box" style="left:108.5px;top:690.0px;width:3.0px;height:4.0px;background:#fff;"></div>
<div class="box" style="left:112.5px;top:660.3px;width:3.0px;height:2.3px;background:#333;border-radius:0 0 2px 2px;"></div>
<div class="box" style="left:117.5px;top:660.5px;width:1.5px;height:2.1px;background:#444;"></div>
<div class="box" style="left:121.0px;top:661.3px;width:1.3px;height:1.3px;background:#555;"></div>
<div class="box" style="left:111.0px;top:651.0px;width:9.0px;height:9.0px;background:#888;border-radius:5px 0 0 5px;"></div>
<div class="box" style="left:120.0px;top:651.0px;width:10.0px;height:9.0px;background:#222;"></div>
<div class="box" style="left:150.0px;top:651.0px;width:10.0px;height:9.0px;background:#222;"></div>
<div class="box" style="left:160.0px;top:651.0px;width:10.0px;height:9.0px;background:#f0f0f0;"></div>
<div class="box" style="left:170.0px;top:651.0px;width:10.0px;height:9.0px;background:#222;"></div>
<div class="box" style="left:180.0px;top:651.0px;width:10.0px;height:9.0px;background:#999;"></div>
<div class="box" style="left:120.0px;top:691.0px;width:10.0px;height:9.0px;background:#e8e8e8;"></div>
<div class="box" style="left:130.0px;top:691.0px;width:10.0px;height:9.0px;background:#222;"></div>
<div class="box" style="left:140.0px;top:691.0px;width:10.0px;height:9.0px;background:#333;"></div>
<div class="box" style="left:150.0px;top:691.0px;width:10.0px;height:9.0px;background:#aaa;"></div>
<div class="box" style="left:170.0px;top:691.0px;width:20.0px;height:9.0px;background:#f6f6f6;"></div>
<div class="box" style="left:190.0px;top:691.0px;width:10.0px;height:9.0px;background:#333;border-radius:0 0 0 0;"></div>
<div class="box" style="left:200.0px;top:691.0px;width:9.0px;height:9.0px;background:#555;border-radius:0 9px 0 0;"></div>
<div class="box" style="left:176.0px;top:741.0px;width:2.5px;height:9.0px;background:#fff;"></div>
<div class="box" style="left:120.0px;top:741.0px;width:10.0px;height:9.0px;background:#aaa;"></div>
<div class="box" style="left:140.0px;top:741.0px;width:10.0px;height:9.0px;background:#222;"></div>
<div class="box" style="left:150.0px;top:741.0px;width:10.0px;height:9.0px;background:#2a2a2a;"></div>
<div class="box" style="left:170.0px;top:741.0px;width:6.0px;height:9.0px;background:#999;border-radius:0 5px 5px 0;"></div>
<div class="box" style="left:240px;top:781px;width:1040px;height:19px;background:#fff"></div>
<div class="box" style="left:851.5px;top:781px;width:120px;height:19px;background:#fafafa"></div>
<div class="box" style="left:11px;top:783px;width:1290px;height:8px;border-radius:4px;background:rgba(190,190,190,.78)"></div>
</body>
</html>
